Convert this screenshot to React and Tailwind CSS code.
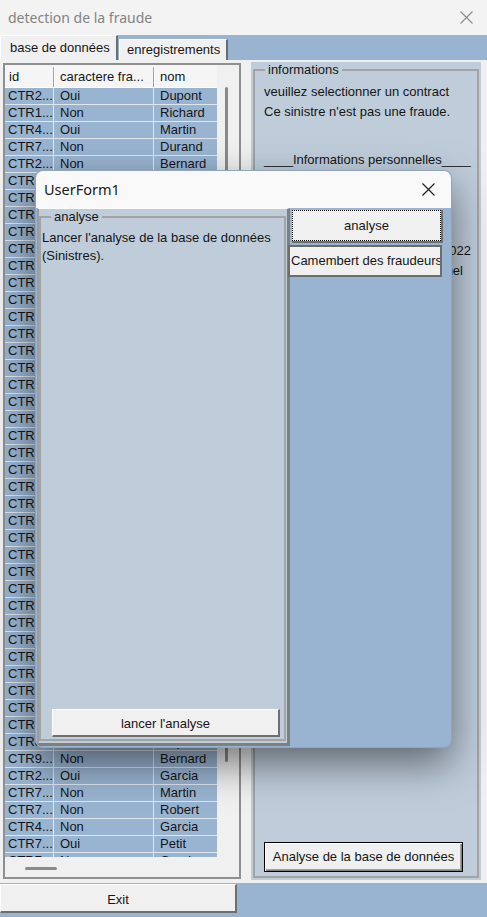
import React from 'react';

const topRows = [
  ['CTR2...', 'Oui', 'Dupont'],
  ['CTR1...', 'Non', 'Richard'],
  ['CTR4...', 'Oui', 'Martin'],
  ['CTR7...', 'Non', 'Durand'],
  ['CTR2...', 'Non', 'Bernard'],
];

const midIds = [
  'CTR3', 'CTR1', 'CTR1', 'CTR5', 'CTR2', 'CTR1', 'CTR2', 'CTR9', 'CTR9', 'CTR4',
  'CTR4', 'CTR8', 'CTR2', 'CTR6', 'CTR3', 'CTR1', 'CTR7', 'CTR5', 'CTR2', 'CTR8',
  'CTR4', 'CTR6', 'CTR3', 'CTR9', 'CTR1', 'CTR5', 'CTR7', 'CTR2', 'CTR4', 'CTR6',
  'CTR8', 'CTR4', 'CTR4', 'CTR8',
];
const names = ['Thomas', 'Petit', 'Robert', 'Garcia', 'Martin', 'Durand', 'Dupont', 'Richard', 'Bernard'];
const midRows = midIds.map((id, i) => [id + '...', i % 3 === 0 ? 'Oui' : 'Non', names[i % names.length]]);

const bottomRows = [
  ['CTR9...', 'Non', 'Bernard'],
  ['CTR2...', 'Oui', 'Garcia'],
  ['CTR7...', 'Non', 'Martin'],
  ['CTR7...', 'Non', 'Robert'],
  ['CTR4...', 'Non', 'Garcia'],
  ['CTR7...', 'Oui', 'Petit'],
  ['CTR7...', 'Non', 'Garcia'],
];

const rows = [...topRows, ...midRows, ...bottomRows];

function CloseIcon({ className }) {
  return (
    <svg width="13" height="13" viewBox="0 0 13 13" className={className}>
      <path d="M0.5 0.5L12.5 12.5M12.5 0.5L0.5 12.5" stroke="currentColor" strokeWidth="1.1" fill="none" />
    </svg>
  );
}

function Row({ r }) {
  return (
    <div className="flex h-[17px] shrink-0 border-b border-[#dfe6ee] bg-[#99b4d1] leading-[16px]">
      <div className="w-[49px] shrink-0 overflow-hidden whitespace-nowrap border-r border-[#dfe6ee] pl-[3px]">{r[0]}</div>
      <div className="w-[100px] shrink-0 border-r border-[#dfe6ee] pl-[6px]">{r[1]}</div>
      <div className="w-[63px] shrink-0 pl-[6px]">{r[2]}</div>
    </div>
  );
}

function ListBox() {
  return (
    <div className="ml-[3px] mt-[3px] flex h-[816px] w-[238px] flex-col border-2 border-[#8f8f8f] bg-[#f0f0f0]">
      <div className="flex h-[792px]">
        <div className="flex w-[212px] flex-col">
          <div className="flex h-[23px] shrink-0 border-b border-white bg-[#f5f5f5] pt-[2px] leading-[20px]">
            <div className="w-[49px] border-r border-[#a0a0a0] pl-[4px]">id</div>
            <div className="w-[100px] border-l border-r border-l-white border-r-[#a0a0a0] pl-[5px]">caractere fra...</div>
            <div className="w-[63px] border-l border-white pl-[5px]">nom</div>
          </div>
          <div className="flex flex-1 flex-col overflow-hidden">
            {rows.map((r, i) => (
              <Row key={i} r={r} />
            ))}
          </div>
        </div>
        <div className="w-[22px] bg-[#f0f0f0]">
          <div className="ml-[8px] mt-[22px] h-[675px] w-[3px] rounded-full bg-[#8a8a8a]" />
        </div>
      </div>
      <div className="h-[20px] bg-[#f0f0f0]">
        <div className="ml-[20px] mt-[10px] h-[3px] w-[32px] rounded-full bg-[#8a8a8a]" />
      </div>
    </div>
  );
}

function InfoFrame() {
  return (
    <div className="ml-[10px] mt-[2px] flex h-[818px] w-[230px] flex-col bg-[#bfcddb] px-[2px] pb-[2px]">
      <fieldset className="h-[816px] border-2 border-[#a3a3a3]">
        <legend className="ml-[10px] px-[3px] leading-[16px]">informations</legend>
        <div className="flex h-[796px] flex-col pl-[9px] pr-[6px]">
          <div className="mt-[4px] leading-[20px]">veuillez selectionner un contract</div>
          <div className="leading-[20px]">Ce sinistre n'est pas une fraude.</div>
          <div className="mt-[28px] leading-[20px]">____Informations personnelles____</div>
          <div className="mt-[11px] leading-[20px]">
            <div>Nom : Dupont</div>
            <div>Prénom : Jean</div>
            <div>Contrat : CTR2</div>
            <div className="flex justify-between">
              <span>Date du sinistre :</span>
              <span>12/03/2022</span>
            </div>
            <div className="flex justify-between pr-[8px]">
              <span>Statut :</span>
              <span>Professionnel</span>
            </div>
          </div>
          <button className="mb-[2px] mt-auto h-[30px] w-[199px] border border-black bg-[#f0f0f0] text-[13px] shadow-[inset_1px_1px_0_#ffffff,inset_-1px_-1px_0_#808080,inset_-2px_-2px_0_#a0a0a0]">
            Analyse de la base de données
          </button>
        </div>
      </fieldset>
    </div>
  );
}

function UserForm() {
  return (
    <div className="absolute left-[35px] top-[170px] flex h-[578px] w-[417px] flex-col overflow-hidden rounded-[8px] border border-[#8d99a6]/60 bg-[#99b4d1] shadow-[0_16px_40px_rgba(0,0,0,0.5)]">
      <div className="flex h-[37px] shrink-0 items-center justify-between bg-[#f9f9f9] pl-[8px] pr-[16px] font-['Noto_Sans',sans-serif] text-[14.5px] text-[#1a1a1a]">
        <span>UserForm1</span>
        <CloseIcon className="text-[#1a1a1a]" />
      </div>
      <div className="flex pl-[1px]">
        <div className="flex h-[538px] w-[253px] flex-col border-b-[3px] border-l-2 border-r-[3px] border-t border-b-[#7f7f7f] border-l-[#9d9d9d] border-r-[#7f7f7f] border-t-white bg-[#bfcddb]">
          <fieldset className="mb-[2px] mr-[1px] h-[532px] border-2 border-[#a3a3a3] text-[13px]">
            <legend className="ml-[10px] px-[3px] leading-[16px]">analyse</legend>
            <div className="flex h-[514px] flex-col pl-[1px]">
              <div className="mt-[4px] whitespace-nowrap leading-[18px]">
                Lancer l'analyse de la base de données
                <br />
                (Sinistres).
              </div>
              <button className="mb-[2px] ml-[10px] mt-auto h-[28px] w-[228px] border-b-2 border-l border-r-2 border-t border-b-[#6f6f6f] border-l-white border-r-[#6f6f6f] border-t-white bg-[#f0f0f0] pt-[2px] text-[13px]">
                lancer l'analyse
              </button>
            </div>
          </fieldset>
        </div>
        <div className="flex flex-col items-start text-[13px]">
          <div className="ml-[2px] mt-[2px] flex h-[33px] w-[151px] border-b-2 border-r-2 border-[#6f6f6f] bg-[#f0f0f0]">
            <div className="flex flex-1 items-center justify-center border border-dotted border-black">analyse</div>
          </div>
          <div className="-ml-[2px] mt-[2px] flex h-[32px] w-[154px] items-center overflow-hidden whitespace-nowrap border-2 border-[#6d6d6d] bg-[#f0f0f0] pl-[1px] text-[13px]">
            Camembert des fraudeurs
          </div>
        </div>
      </div>
    </div>
  );
}

export default function App() {
  return (
    <div className="relative h-[917px] w-[487px] overflow-hidden bg-[#99b4d1] font-['Liberation_Sans',Arial,sans-serif] text-[13px] text-[#151515]">
      <div className="flex h-[35px] items-center justify-between bg-[#f3f3f3] pl-[8px] pr-[14px] font-['Noto_Sans',sans-serif] text-[14px] text-[#838383]">
        <span>detection de la fraude</span>
        <CloseIcon className="text-[#8a8a8a]" />
      </div>
      <div className="flex h-[25px] items-end">
        <div className="flex h-[25px] w-[118px] items-center border-l border-r-2 border-t border-l-white border-r-[#6d6d6d] border-t-white bg-[#f0f0f0] pl-[9px]">
          base de données
        </div>
        <div className="ml-[1px] flex h-[21px] w-[109px] items-center border-l border-r-2 border-t border-l-white border-r-[#6d6d6d] border-t-white bg-[#f0f0f0] pl-[7px]">
          enregistrements
        </div>
      </div>
      <div className="flex h-[823px] items-start bg-[#f0f0f0]">
        <ListBox />
        <InfoFrame />
      </div>
      <div className="h-[34px] pt-[1px]">
        <button className="h-[29px] w-[237px] border-b-2 border-l border-r-2 border-t border-b-[#6f6f6f] border-l-white border-r-[#6f6f6f] border-t-white bg-[#f0f0f0] pt-[3px] text-[13px]">
          Exit
        </button>
      </div>
      <UserForm />
    </div>
  );
}
